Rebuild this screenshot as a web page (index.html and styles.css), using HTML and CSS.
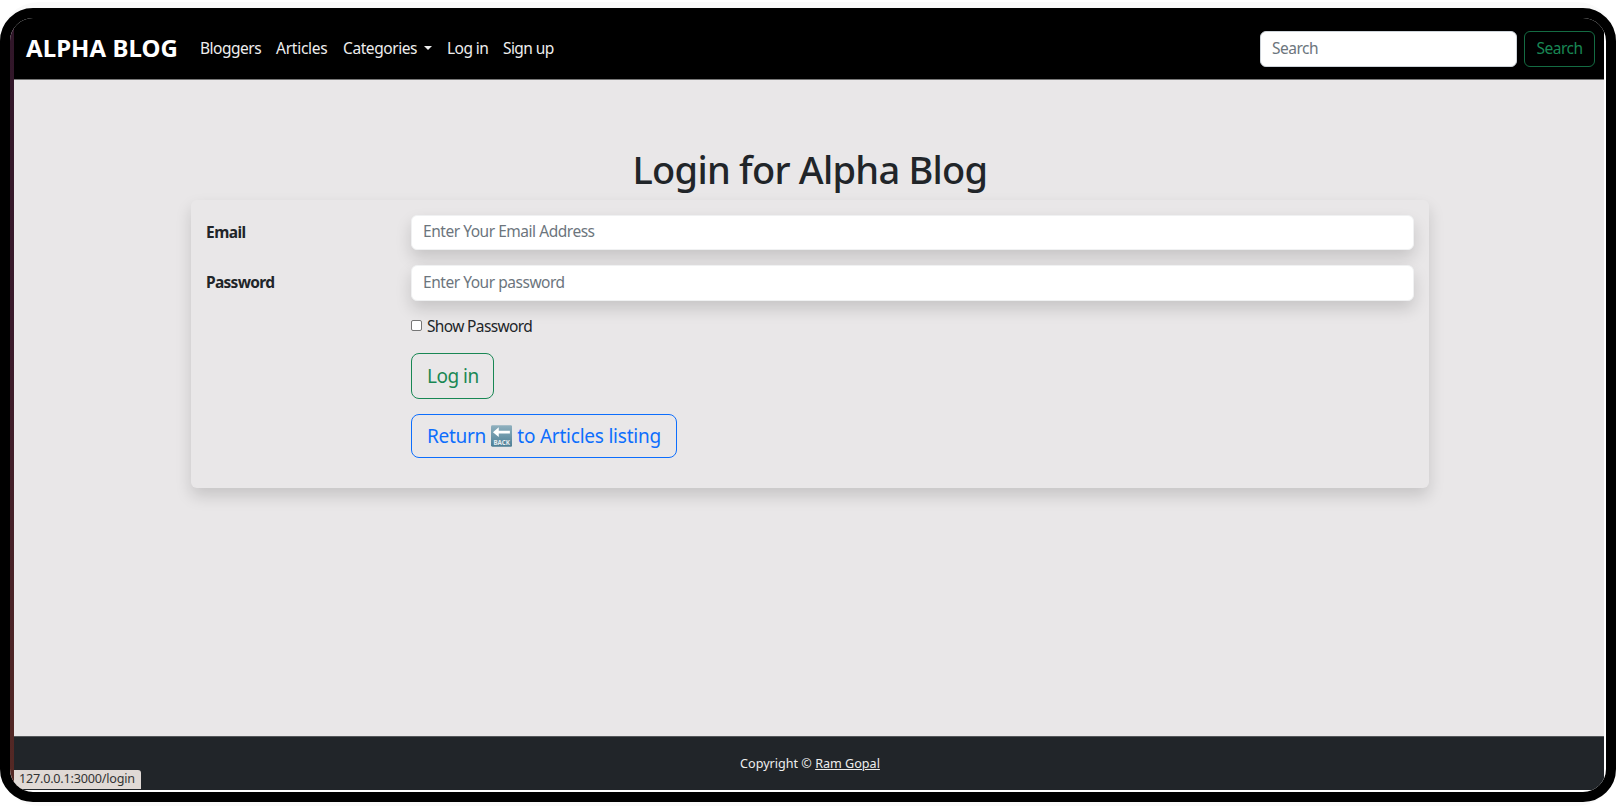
FILE: index.html
```html
<!DOCTYPE html>
<html lang="en">
<head>
<meta charset="utf-8">
<title>Alpha Blog</title>
<link rel="stylesheet" href="styles.css">
</head>
<body>
<div class="halo">
<div class="frame">
<div class="edge"></div>
<div class="app">
  <nav class="navbar">
    <a class="brand">ALPHA BLOG</a>
    <a class="link bloggers">Bloggers</a>
    <a class="link articles">Articles</a>
    <a class="link categories">Categories<i class="caret"></i></a>
    <a class="link login">Log in</a>
    <a class="link signup">Sign up</a>
    <div class="search">Search</div>
    <button class="search-btn">Search</button>
  </nav>
  <main class="main">
    <h1 class="title">Login for Alpha Blog</h1>
    <form class="card">
      <div class="row"><label class="label email">Email</label><div class="field">Enter Your Email Address</div></div>
      <div class="row second"><label class="label">Password</label><div class="field tall">Enter Your password</div></div>
      <div class="actions">
        <label class="check"><i class="box"></i>Show Password</label>
        <button class="btn green" type="button">Log in</button>
        <a class="btn blue"><span>Return</span><svg class="back" viewBox="0 0 22 22"><defs><linearGradient id="tile" x1="0" y1="0" x2="0" y2="1"><stop offset="0" stop-color="#8fb0be"/><stop offset="1" stop-color="#4d7f96"/></linearGradient></defs><rect width="22" height="22" rx="1.5" fill="url(#tile)"/><path d="M2 7 8 2v3.5h11.5v3H8V12z" fill="#fff"/><text x="11" y="20" text-anchor="middle" textLength="17" lengthAdjust="spacingAndGlyphs" class="back-text">BACK</text></svg><span class="listing">to Articles listing</span></a>
      </div>
    </form>
  </main>
  <footer class="footer"><span class="copy">Copyright © </span><a class="author">Ram Gopal</a><div class="status">127.0.0.1:3000/login</div></footer>
</div>
</div>
</div>
</body>
</html>
```
FILE: styles.css
```css
*{box-sizing:border-box}
body{margin:0;background:#fff;font-family:"Noto Sans",sans-serif;font-size:15.5px;color:#212529;height:806px;overflow:hidden;padding-top:2px}
.halo{background:#fafafa;border-radius:39px;padding:6px 0 4px;height:804px}
.frame{height:794px;border:10px solid #000;border-radius:33px;background:#fff;overflow:hidden;display:flex}
.edge{width:4px;height:100%;background:linear-gradient(#301629,#3a1a2b 40%,#552924)}
.app{width:1590px;height:771.5px;display:flex;flex-direction:column}
.navbar{height:62px;flex:none;background:#000;border-bottom:1px solid #777;color:#eee;display:flex;align-items:center;padding:0 9px 0 12px}
.brand{font-size:24px;font-weight:700;color:#fff;width:174px;letter-spacing:.06px;padding-bottom:2px}
.link{display:flex;align-items:center;padding-bottom:1px;white-space:nowrap}
.bloggers{width:76px;letter-spacing:-.5px}
.articles{width:67px;letter-spacing:-.25px}
.categories{width:104px;letter-spacing:-.42px}
.login{width:56px;letter-spacing:-.55px}
.signup{letter-spacing:-.6px}
.caret{border:4.5px solid transparent;border-top-color:#eee;border-bottom:0;margin:0 0 1px 7px}
.search{margin-left:auto;width:257px;height:36px;background:#fff;border:1px solid #ced4da;border-radius:6px;color:#6c757d;padding:0 11px 2px;display:flex;align-items:center;letter-spacing:-.5px}
.search-btn{width:71px;height:36px;margin-left:7px;border:1px solid #146c43;border-radius:6px;background:#000;color:#198754;font:inherit;letter-spacing:-.5px;padding:0 0 2px}
.main{flex:1;background:#e9e7e8}
.title{margin:63px 0 0;height:57px;padding-left:2px;text-align:center;font-size:38px;line-height:52px;font-weight:500;letter-spacing:-.75px}
.card{width:1238px;height:288px;margin:0 0 0 177px;border-radius:6px;padding:15px 15px 0;box-shadow:0 8px 16px rgba(0,0,0,.15)}
.row{display:flex}
.second{margin-top:15px}
.label{width:205px;font-weight:700;line-height:35px;letter-spacing:-.7px}
.email{letter-spacing:-.55px}
.field{flex:1;height:35px;border-radius:6px;background:#fff;border:1px solid #f0f1f2;box-shadow:0 8px 16px rgba(0,0,0,.15);color:#6c757d;padding:0 11px;line-height:30px;letter-spacing:-.47px}
.tall{height:36px;line-height:32px}
.actions{margin-left:205px;display:flex;flex-direction:column;align-items:flex-start}
.check{display:flex;align-items:center;gap:5px;margin-top:14px;height:22px;letter-spacing:-.65px}
.box{width:11px;height:11px;margin-bottom:1px;border:1px solid #767676;border-radius:2px;background:#fff}
.btn{border:1px solid;border-radius:8px;background:none;font:19px "Noto Sans",sans-serif;padding:0 15px 1px;display:flex;align-items:center;white-space:nowrap}
.green{color:#198754;width:83px;height:46px;margin-top:16px;letter-spacing:-.5px}
.blue{color:#0d6efd;width:266px;height:44px;margin-top:15px;letter-spacing:-.3px}
.listing{letter-spacing:-.22px}
.back{width:22px;height:22px;margin:0 5px}
.back-text{font:700 7px "Noto Sans",sans-serif;fill:#e8eef1;letter-spacing:0}
.footer{height:53.5px;flex:none;background:#212529;border-top:1px solid #54575a;color:#eee;font-size:12.6px;display:flex;align-items:center;justify-content:center;position:relative;padding-left:2px}
.copy{white-space:pre}
.author{text-decoration:underline}
.status{position:absolute;left:0;bottom:.5px;width:127px;height:19.5px;background:#e0d9d5;color:#333;border-radius:0 3px 0 0;padding-left:5px;line-height:18px;letter-spacing:-.2px}
```
